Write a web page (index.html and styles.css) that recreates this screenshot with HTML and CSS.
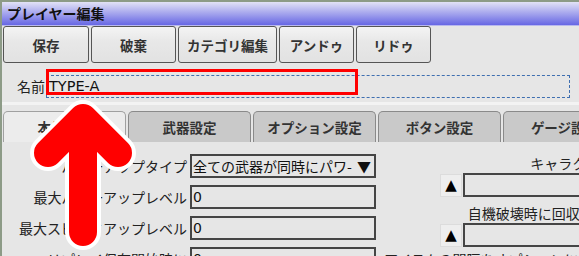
FILE: index.html
```html
<!DOCTYPE html>
<html lang="ja">
<head>
  <meta charset="UTF-8" />
  <title>プレイヤー編集</title>
  <link rel="stylesheet" href="styles.css">
</head>
<body>
  <div class="window">
    <div class="titlebar">プレイヤー編集</div>

    <div class="toolbar">
      <button class="btn w-save">保存</button>
      <button class="btn w-discard">破棄</button>
      <button class="btn w-category">カテゴリ編集</button>
      <button class="btn w-undo">アンドゥ</button>
      <button class="btn w-redo">リドゥ</button>
    </div>

    <div class="name-row">
      <span class="name-label">名前</span>
      <div class="name-field">TYPE-A</div>
    </div>

    <div class="tabpane">
      <div class="tabs">
        <div class="tab active">本体設定</div>
        <div class="tab">武器設定</div>
        <div class="tab">オプション設定</div>
        <div class="tab">ボタン設定</div>
        <div class="tab">ゲージ設定</div>
      </div>

      <div class="tab-body">
        <div class="left-col">
          <div class="row">
            <span class="label">パワーアップタイプ</span>
            <div class="select">全ての武器が同時にパワ-<span class="caret">▼</span></div>
          </div>
          <div class="row">
            <span class="label">最大パワーアップレベル</span>
            <div class="field">0</div>
          </div>
          <div class="row">
            <span class="label">最大スピードアップレベル</span>
            <div class="field">0</div>
          </div>
          <div class="row">
            <span class="label">リプレイ保存開始時に</span>
            <div class="field">0</div>
            <span class="side-label">アイテムの間隔をオプションに</span>
          </div>
        </div>

        <div class="right-col">
          <div class="group-label">キャラクター</div>
          <div class="picker">
            <button class="up">▲</button>
            <div class="field wide"></div>
          </div>
          <div class="group-label">自機破壊時に回収されるアイテム</div>
          <div class="picker">
            <button class="up">▲</button>
            <div class="field wide"></div>
          </div>
        </div>
      </div>
    </div>
  </div>

  <!-- annotation overlay -->
  <div class="mark-box"></div>
  <svg class="mark-arrow" width="579" height="256" viewBox="0 0 579 256">
    <g fill="none" stroke-linecap="round" stroke-linejoin="round">
      <path d="M83 232 L83 118 M48 153 L83 118 L118 153" stroke="#ffffff" stroke-width="36"/>
      <path d="M83 232 L83 118 M48 153 L83 118 L118 153" stroke="#ff0000" stroke-width="28"/>
    </g>
  </svg>
</body>
</html>
```

FILE: styles.css
```css
body {
  margin: 0;
  width: 579px;
  height: 256px;
  overflow: hidden;
  background: #8d9b87;
  font-family: "Noto Sans CJK JP", "DejaVu Sans", sans-serif;
  color: #222;
  position: relative;
}

.window {
  margin: 2px 0 0 2px;
  height: 254px;
  width: 800px;
  background: #e6e6e6;
}

.titlebar {
  height: 23px;
  line-height: 23px;
  padding-left: 5px;
  font-size: 14px;
  font-weight: bold;
  color: #111;
  background: linear-gradient(#e2e2f6, #6767e4);
  border-bottom: 1px solid #b8b8ee;
}

.toolbar {
  display: flex;
  gap: 2px;
  padding-left: 1px;
}

.btn {
  height: 37px;
  box-sizing: border-box;
  border: 1px solid #555;
  border-radius: 3px;
  background: linear-gradient(#f4f4f4, #e8e8e8 40%, #e2e2e2);
  font-family: inherit;
  font-size: 13.5px;
  font-weight: bold;
  color: #333;
  padding: 0;
}

.w-save { width: 86px; }
.w-discard { width: 85px; }
.w-category { width: 99px; }
.w-undo { width: 75px; }
.w-redo { width: 75px; }

.name-row {
  display: flex;
  align-items: center;
  padding: 7px 0 0 15px;
  height: 32px;
}

.name-label {
  font-size: 14px;
  width: 29px;
}

.name-field {
  width: 520px;
  height: 21px;
  line-height: 21px;
  border: 1px dashed #3f6fb0;
  font-family: "DejaVu Sans", sans-serif;
  font-size: 14.5px;
  color: #111;
  padding-left: 2px;
}

.tabpane {
  border-top: 3px solid #f3f3f3;
}

.tabs {
  display: flex;
  gap: 2px;
  padding: 6px 0 0 1px;
}

.tab {
  width: 121px;
  height: 30px;
  line-height: 30px;
  text-align: center;
  font-size: 13.5px;
  font-weight: bold;
  color: #333;
  background: #c9c9c9;
  border: 1px solid #8a8a8a;
  border-bottom: none;
  border-radius: 5px 5px 0 0;
}

.tab.active {
  background: #ececec;
  border-color: #a0a0a0;
}

.tab-body {
  display: flex;
  padding-top: 12px;
  padding-left: 1px;
}

.left-col {
  display: flex;
  flex-direction: column;
  gap: 7px;
  width: 373px;
  flex-shrink: 0;
}

.row {
  display: flex;
  align-items: center;
  gap: 3px;
}

.label {
  width: 184px;
  flex-shrink: 0;
  text-align: right;
  font-size: 14px;
  white-space: nowrap;
}

.side-label {
  font-size: 14px;
  margin-left: 5px;
  white-space: nowrap;
}

.field,
.select {
  width: 181px;
  flex-shrink: 0;
  height: 20px;
  line-height: 20px;
  border: 2px solid #454545;
  background: #e6e6e6;
  font-family: "DejaVu Sans", sans-serif;
  font-size: 14px;
  padding-left: 1px;
  color: #111;
}

.select {
  display: flex;
  justify-content: space-between;
  font-family: "Noto Sans CJK JP", sans-serif;
  white-space: nowrap;
}

.caret {
  font-size: 14px;
  padding-right: 3px;
}

.right-col {
  width: 264px;
  margin-left: 64px;
  display: flex;
  flex-direction: column;
}

.group-label {
  text-align: center;
  font-size: 14px;
  height: 18px;
  line-height: 18px;
  white-space: nowrap;
  margin-bottom: 1px;
}

.picker {
  display: flex;
  align-items: center;
  margin-bottom: 7px;
}

.up {
  width: 23px;
  height: 23px;
  padding: 0;
  border: 1px solid #dcdcdc;
  background: #eeeeee;
  font-family: "DejaVu Sans", sans-serif;
  font-size: 15px;
  line-height: 1;
  color: #000;
}

.field.wide {
  width: 236px;
  margin-left: 1px;
}

.mark-box {
  position: absolute;
  left: 46px;
  top: 69px;
  width: 306px;
  height: 20px;
  border: 3px solid #f00;
}

.mark-arrow {
  position: absolute;
  left: 0;
  top: 0;
}
```
